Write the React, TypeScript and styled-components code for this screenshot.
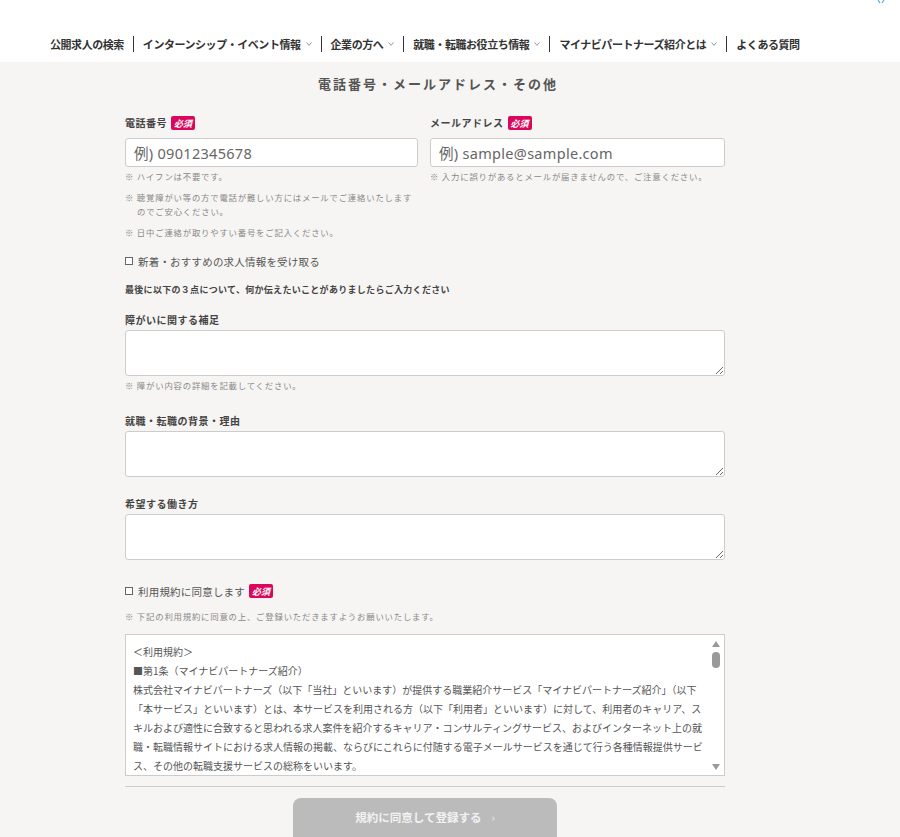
import React from 'react';
import styled, { createGlobalStyle } from 'styled-components';

const GlobalStyle = createGlobalStyle`
  html, body {
    margin: 0;
    padding: 0;
    background: #f6f5f3;
    font-family: "Noto Sans CJK JP", "Noto Sans", sans-serif;
    color: #444;
  }
  * {
    box-sizing: border-box;
  }
`;

const Header = styled.header`
  background: #fff;
  height: 62px;
  display: flex;
  flex-direction: column;
`;

const TopBar = styled.div`
  height: 36px;
  display: flex;
  justify-content: flex-end;
  padding-right: 14px;
`;

const Nav = styled.nav`
  display: flex;
  align-items: center;
  padding-left: 41px;
`;

const NavItem = styled.a<{ $first?: boolean }>`
  display: flex;
  align-items: center;
  gap: 5px;
  padding: 0 9px;
  border-left: ${({ $first }) => ($first ? 'none' : '1px solid #333')};
  color: #333;
  text-decoration: none;
  font-size: 11px;
  font-weight: 700;
  letter-spacing: -0.45px;
  line-height: 16px;
  white-space: nowrap;
`;

const Chevron = () => (
  <svg width="6" height="4" viewBox="0 0 6 4">
    <path d="M0.5 0.5 L3 3.3 L5.5 0.5" fill="none" stroke="#888" strokeWidth="0.9" />
  </svg>
);

const Main = styled.main`
  padding: 13px 0 0 125px;
`;

const Form = styled.div`
  width: 600px;
`;

const Title = styled.h2`
  margin: 0;
  padding-left: 26px;
  text-align: center;
  font-size: 13px;
  font-weight: 700;
  letter-spacing: 2px;
  line-height: 18px;
  color: #555;
`;

const Columns = styled.div`
  display: grid;
  grid-template-columns: 293px 295px;
  column-gap: 12px;
  margin-top: 21px;
`;

const Field = styled.div`
  display: flex;
  flex-direction: column;
`;

const LabelRow = styled.div<{ $mb?: number }>`
  display: flex;
  align-items: center;
  gap: 4px;
  height: 18px;
  margin-bottom: ${({ $mb }) => $mb ?? 6}px;
`;

const Label = styled.label`
  font-size: 10px;
  font-weight: 700;
  letter-spacing: 0.5px;
  color: #444;
  line-height: 16px;
`;

const Badge = styled.span<{ $ml?: number }>`
  display: inline-flex;
  align-items: center;
  justify-content: center;
  height: 14px;
  margin-left: ${({ $ml }) => $ml ?? 0}px;
  padding: 0 3px;
  border-radius: 2px;
  background: #d9085c;
  color: #fff;
  font-size: 9px;
  font-weight: 700;
  font-style: italic;
  letter-spacing: 0;
`;

const Input = styled.input`
  height: 29px;
  width: 100%;
  border: 1px solid #ccc;
  border-radius: 3px;
  background: #fff;
  padding: 0 8px;
  font-family: "Noto Sans", "Noto Sans CJK JP", sans-serif;
  font-size: 14.5px;
  letter-spacing: 0.3px;
  color: #333;
  outline: none;
  &::placeholder {
    color: #666;
  }
`;

const Note = styled.p<{ $mt?: number }>`
  margin: ${({ $mt }) => $mt ?? 7}px 0 0;
  padding-left: 12px;
  text-indent: -12px;
  font-size: 8.4px;
  letter-spacing: 0.8px;
  line-height: 14px;
  color: #888;
`;

const CheckRow = styled.label<{ $mt: number }>`
  display: flex;
  align-items: center;
  height: 16px;
  margin-top: ${({ $mt }) => $mt}px;
  font-size: 10.5px;
  letter-spacing: 0.2px;
  color: #555;
`;

const Check = styled.input`
  appearance: none;
  width: 8px;
  height: 8px;
  margin: 0 5px 0 0;
  border: 1px solid #666;
  background: #fff;
  border-radius: 0;
`;

const Lead = styled.p`
  margin: 14px 0 0;
  font-size: 9px;
  font-weight: 700;
  letter-spacing: 0.3px;
  line-height: 14px;
  color: #444;
`;

const Group = styled.div<{ $mt: number }>`
  display: flex;
  flex-direction: column;
  margin-top: ${({ $mt }) => $mt}px;
`;

const Area = styled.textarea`
  width: 600px;
  height: 46px;
  border: 1px solid #ccc;
  border-radius: 3px;
  background: #fff;
  resize: vertical;
  display: block;
  outline: none;
`;

const TermsBox = styled.div`
  margin-top: 11px;
  height: 142px;
  border: 1px solid #ccc;
  background: #fff;
  display: flex;
  overflow: hidden;
`;

const TermsText = styled.div`
  width: 582px;
  padding: 7px 0 0 7px;
  font-size: 10px;
  line-height: 19px;
  color: #555;
  overflow: hidden;
  p {
    margin: 0;
  }
`;

const ScrollRail = styled.div`
  flex: 1;
  display: flex;
  flex-direction: column;
  align-items: center;
  padding: 6px 0 5px;
`;

const Arrow = styled.span<{ $down?: boolean }>`
  width: 0;
  height: 0;
  border-left: 4.5px solid transparent;
  border-right: 4.5px solid transparent;
  ${({ $down }) => ($down ? 'border-top: 6px solid #999;' : 'border-bottom: 6px solid #999;')}
  ${({ $down }) => ($down ? 'margin-top: auto;' : '')}
`;

const Thumb = styled.span`
  width: 8px;
  height: 16px;
  margin-top: 5px;
  border-radius: 4px;
  background: #9a9a9a;
`;

const Rule = styled.hr`
  margin: 10px 0 0;
  border: none;
  border-top: 1px solid #ccc;
`;

const ButtonWrap = styled.div`
  display: flex;
  justify-content: center;
  margin-top: 11px;
`;

const Submit = styled.button`
  width: 264px;
  height: 48px;
  border: none;
  border-radius: 8px;
  background: #bbbbbb;
  color: #f2f2f2;
  font-family: "Noto Sans CJK JP", sans-serif;
  font-size: 11.5px;
  font-weight: 700;
  display: flex;
  align-items: flex-start;
  justify-content: center;
  gap: 10px;
  padding-top: 11px;
  line-height: 16px;
`;

const Caret = styled.span`
  font-weight: 400;
  font-size: 11px;
  color: #ececec;
`;

const navItems = [
  { label: '公開求人の検索', drop: false },
  { label: 'インターンシップ・イベント情報', drop: true },
  { label: '企業の方へ', drop: true },
  { label: '就職・転職お役立ち情報', drop: true },
  { label: 'マイナビパートナーズ紹介とは', drop: true },
  { label: 'よくある質問', drop: false },
];

export default function App() {
  return (
    <>
      <GlobalStyle />
      <Header>
        <TopBar>
          <svg width="10" height="4" viewBox="0 0 10 4">
            <path d="M2 0 L4 3 M8 0 L6 3" stroke="#6aa7e8" strokeWidth="1.3" />
          </svg>
        </TopBar>
        <Nav>
          {navItems.map((n, i) => (
            <NavItem key={n.label} href="#" $first={i === 0}>
              {n.label}
              {n.drop && <Chevron />}
            </NavItem>
          ))}
        </Nav>
      </Header>

      <Main>
        <Form>
          <Title>電話番号・メールアドレス・その他</Title>

          <Columns>
            <Field>
              <LabelRow>
                <Label>電話番号</Label>
                <Badge>必須</Badge>
              </LabelRow>
              <Input type="tel" placeholder="例) 09012345678" />
              <Note $mt={2}>※ ハイフンは不要です。</Note>
              <Note>※ 聴覚障がい等の方で電話が難しい方にはメールでご連絡いたしますのでご安心ください。</Note>
              <Note>※ 日中ご連絡が取りやすい番号をご記入ください。</Note>
            </Field>
            <Field>
              <LabelRow>
                <Label>メールアドレス</Label>
                <Badge>必須</Badge>
              </LabelRow>
              <Input type="email" placeholder="例) sample@sample.com" />
              <Note $mt={2}>※ 入力に誤りがあるとメールが届きませんので、ご注意ください。</Note>
            </Field>
          </Columns>

          <CheckRow $mt={14}>
            <Check type="checkbox" />
            新着・おすすめの求人情報を受け取る
          </CheckRow>

          <Lead>最後に以下の３点について、何か伝えたいことがありましたらご入力ください</Lead>

          <Group $mt={14}>
            <LabelRow $mb={1}>
              <Label>障がいに関する補足</Label>
            </LabelRow>
            <Area />
            <Note $mt={2}>※ 障がい内容の詳細を記載してください。</Note>
          </Group>

          <Group $mt={20}>
            <LabelRow $mb={1}>
              <Label>就職・転職の背景・理由</Label>
            </LabelRow>
            <Area />
          </Group>

          <Group $mt={18}>
            <LabelRow $mb={1}>
              <Label>希望する働き方</Label>
            </LabelRow>
            <Area />
          </Group>

          <CheckRow $mt={23}>
            <Check type="checkbox" />
            利用規約に同意します
            <Badge $ml={4}>必須</Badge>
          </CheckRow>
          <Note $mt={10}>※ 下記の利用規約に同意の上、ご登録いただきますようお願いいたします。</Note>

          <TermsBox>
            <TermsText>
              <p>＜利用規約＞</p>
              <p>■第1条（マイナビパートナーズ紹介）</p>
              <p>
                株式会社マイナビパートナーズ（以下「当社」といいます）が提供する職業紹介サービス「マイナビパートナーズ紹介」（以下「本サービス」といいます）とは、本サービスを利用される方（以下「利用者」といいます）に対して、利用者のキャリア、スキルおよび適性に合致すると思われる求人案件を紹介するキャリア・コンサルティングサービス、およびインターネット上の就職・転職情報サイトにおける求人情報の掲載、ならびにこれらに付随する電子メールサービスを通じて行う各種情報提供サービス、その他の転職支援サービスの総称をいいます。
              </p>
            </TermsText>
            <ScrollRail>
              <Arrow />
              <Thumb />
              <Arrow $down />
            </ScrollRail>
          </TermsBox>

          <Rule />

          <ButtonWrap>
            <Submit type="button">
              規約に同意して登録する
              <Caret>›</Caret>
            </Submit>
          </ButtonWrap>
        </Form>
      </Main>
    </>
  );
}
